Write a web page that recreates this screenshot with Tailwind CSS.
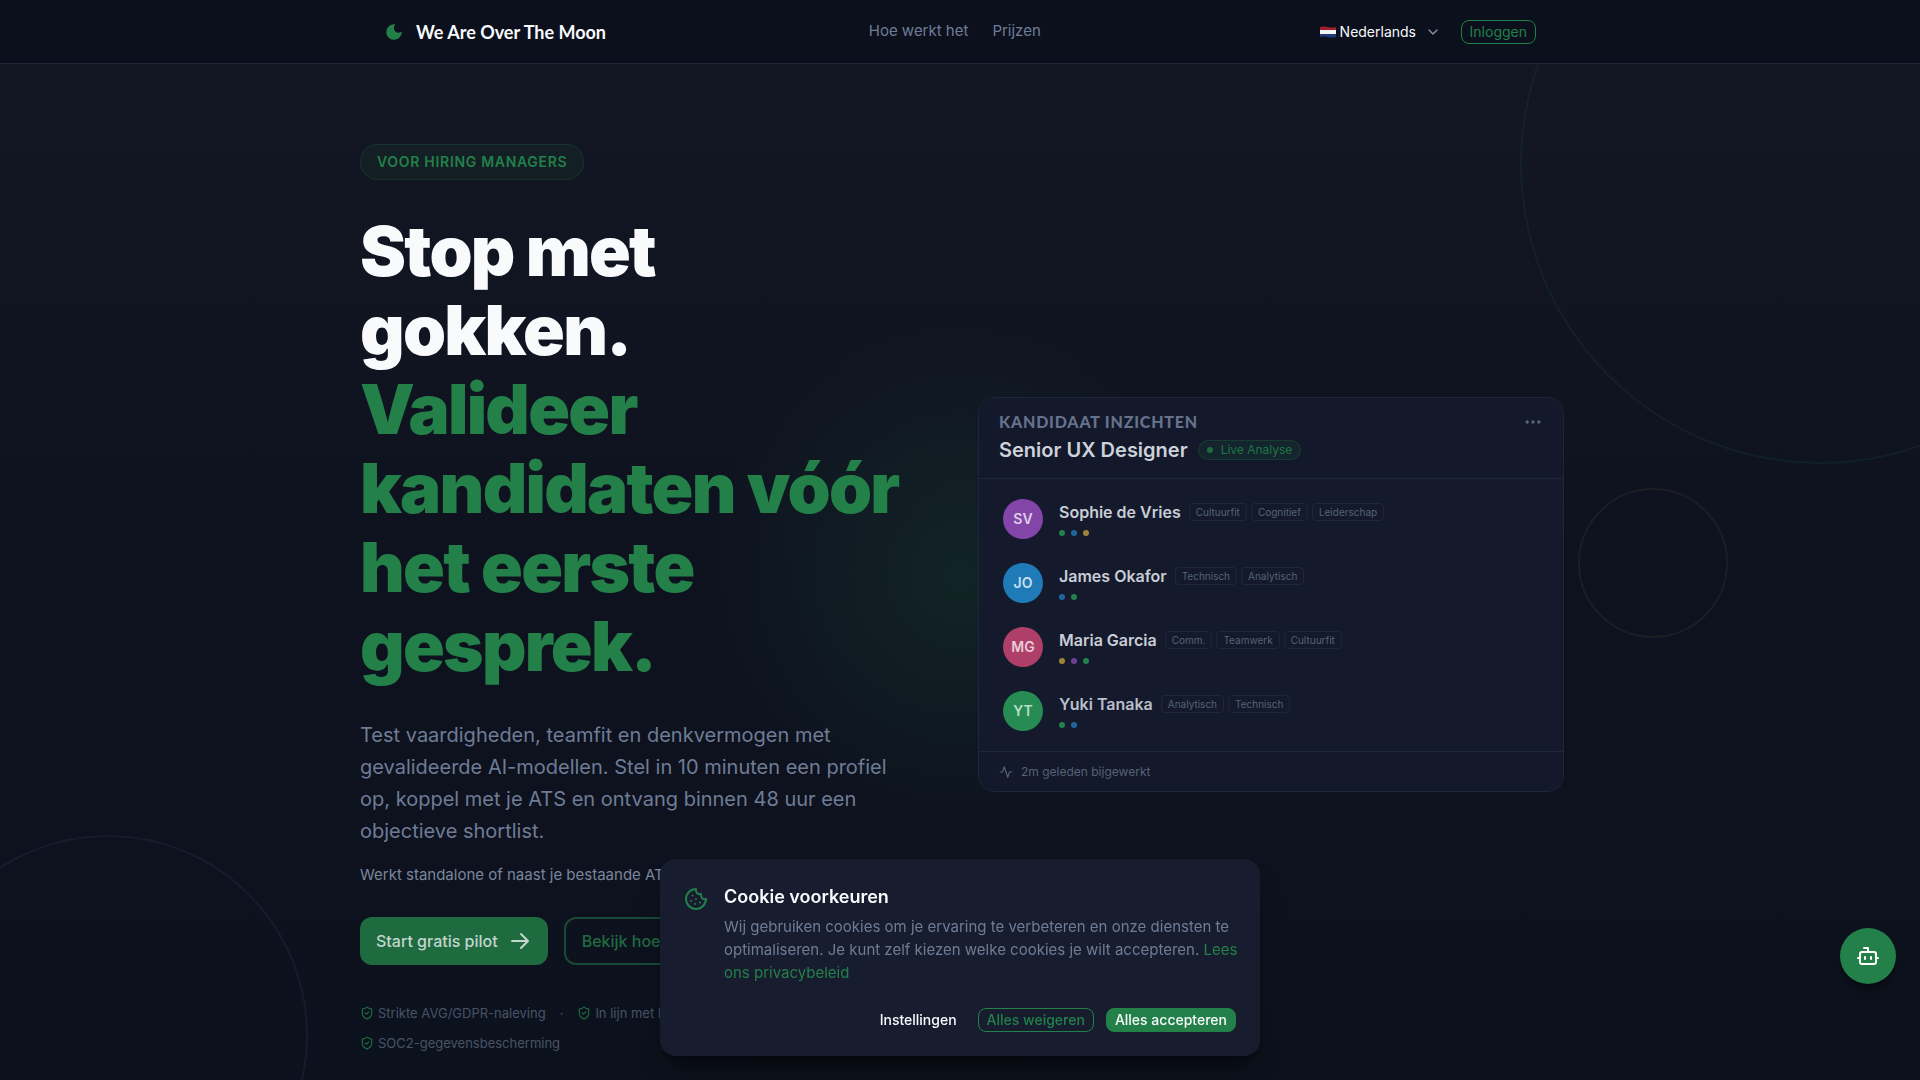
<!DOCTYPE html>
<html lang="nl">
<head>
    <meta charset="UTF-8">
    <meta name="viewport" content="width=device-width, initial-scale=1.0">
    <title>We Are Over The Moon</title>
    <script src="https://cdn.jsdelivr.net/npm/@tailwindcss/browser@4"></script>
</head>
<body class="bg-[#0d131e] font-['Inter',sans-serif] text-slate-50 overflow-x-hidden">
    <header class="relative z-20 bg-[#0c101d] border-b border-[#1e2739]">
        <div class="max-w-[1152px] h-[63px] mx-auto flex items-center justify-between">
            <a href="/" class="flex items-center gap-3 font-['Lato',sans-serif] text-lg font-bold">
                <svg class="size-5" viewBox="0 0 20 20" fill="#228048"><path d="M9.600 2.200A7.800 7.800 0 1 0 17.800 10.400C17.800 9.900 17.400 9.700 17 10c-2.200 1.500-5 .8-6.300-1.200-1.100-1.700-1-3.900.1-5.600.3-.5 0-1-.6-1z"/></svg>
                We Are Over The Moon
            </a>
            <nav class="mr-4 flex items-center gap-6 text-[15px] text-[#6f7c96]">
                <a href="#hoe-werkt-het">Hoe werkt het</a>
                <a href="#prijzen">Prijzen</a>
            </nav>
            <div class="flex items-center gap-5">
                <div class="relative flex items-center gap-1">
                    <svg class="w-4 h-3" viewBox="0 0 16 12"><path fill="#a51d2d" d="M0 1q4-1 8 0t8 0v4H0z"/><path fill="#f4f5f7" d="M0 4h16v4H0z"/><path fill="#1e3a78" d="M0 8h16v3q-4 1-8 0t-8 0z"/></svg>
                    <label for="language" class="hidden">Taal</label>
                    <select id="language" class="appearance-none bg-transparent h-6 pr-6 text-sm leading-5">
                        <option>Nederlands</option>
                    </select>
                    <svg class="absolute right-0 size-4 pointer-events-none" viewBox="0 0 24 24" fill="none" stroke="#8a95a8" stroke-width="2" stroke-linecap="round" stroke-linejoin="round"><path d="m6 9 6 6 6-6"/></svg>
                </div>
                <a href="/login" class="flex items-center h-6 px-2 rounded-lg border border-[#228048] text-sm text-[#228048]">Inloggen</a>
            </div>
        </div>
    </header>

    <main class="relative overflow-hidden min-h-[calc(100vh-64px)] bg-linear-to-b from-[#131623] via-[#0e121f] to-[#0c121d]">
        <!-- Decorative rings and glow -->
        <div class="absolute -top-50 -right-50 size-150 rounded-full border-2 border-[#228048]/12"></div>
        <div class="absolute top-106 right-[10%] size-[150px] rounded-full border-2 border-[#a08040]/10"></div>
        <div class="absolute top-[771px] -left-[92px] size-100 rounded-full border-2 border-[#404070]/20"></div>
        <div class="absolute top-53 left-1/2 size-150 -translate-x-1/2 bg-radial from-[#228048]/16 to-transparent to-60%"></div>

        <div class="relative max-w-[1200px] mx-auto pt-20 pb-6 flex items-center justify-between gap-8">
            <section class="max-w-[560px]">
                <p class="inline-flex items-center h-9 px-4 rounded-full border border-[#228048]/20 bg-[#228048]/10 text-sm font-semibold tracking-wider text-[#228048]">VOOR HIRING MANAGERS</p>
                <h1 class="mt-8 text-[69px] leading-[79px] font-black tracking-tight">
                    <span class="block">Stop met<br>gokken.</span>
                    <span class="block text-[#228048]">Valideer<br><span class="whitespace-nowrap">kandidaten vóór</span><br>het eerste<br>gesprek.</span>
                </h1>
                <p class="mt-[33px] text-xl leading-8 text-[#6f7c96]">Test vaardigheden, teamfit en denkvermogen met gevalideerde AI-modellen. Stel in 10 minuten een profiel op, koppel met je ATS en ontvang binnen 48 uur een objectieve shortlist.</p>
                <p class="mt-4 text-[15px] leading-6 text-[#7a869c]">Werkt standalone of naast je bestaande ATS-systeem.</p>
                <div class="mt-[30px] flex gap-4">
                    <a href="/pilot" class="flex items-center gap-[10px] h-12 px-4 rounded-xl bg-[#1d6b3f] text-base font-medium text-[#c3d6cd]">Start gratis pilot
                        <svg class="size-6" viewBox="0 0 24 24" fill="none" stroke="currentColor" stroke-width="2" stroke-linecap="round" stroke-linejoin="round"><path d="M4 12h16M13 5l7 7-7 7"/></svg>
                    </a>
                    <a href="#hoe-werkt-het" class="flex items-center h-12 px-4 rounded-xl border-2 border-[#1a4a35] text-base font-medium text-[#1f6b41]">Bekijk hoe het werkt</a>
                </div>
                <ul class="mt-[38px] flex flex-wrap items-center gap-x-[14px] gap-y-[10px] text-[13px] leading-5 text-[#485266]">
                    <li class="flex items-center gap-1">
                        <svg class="size-[14px]" viewBox="0 0 24 24" fill="none" stroke="#1f6b41" stroke-width="2" stroke-linecap="round" stroke-linejoin="round"><path d="M20 13c0 5-3.500 7.500-7.700 9a1 1 0 0 1-.6 0C7.500 20.500 4 18 4 13V6a1 1 0 0 1 1-1c2 0 4.500-1.200 6.200-2.700a1.200 1.200 0 0 1 1.600 0C14.500 3.800 17 5 19 5a1 1 0 0 1 1 1z"/><path d="m9 12 2 2 4-4"/></svg>
                        Strikte AVG/GDPR-naleving
                    </li>
                    <li aria-hidden="true">·</li>
                    <li class="flex items-center gap-1">
                        <svg class="size-[14px]" viewBox="0 0 24 24" fill="none" stroke="#1f6b41" stroke-width="2" stroke-linecap="round" stroke-linejoin="round"><path d="M20 13c0 5-3.500 7.500-7.700 9a1 1 0 0 1-.6 0C7.500 20.500 4 18 4 13V6a1 1 0 0 1 1-1c2 0 4.500-1.200 6.200-2.700a1.200 1.200 0 0 1 1.600 0C14.500 3.800 17 5 19 5a1 1 0 0 1 1 1z"/><path d="m9 12 2 2 4-4"/></svg>
                        In lijn met EU AI Act-vereisten
                    </li>
                    <li class="flex items-center gap-1">
                        <svg class="size-[14px]" viewBox="0 0 24 24" fill="none" stroke="#1f6b41" stroke-width="2" stroke-linecap="round" stroke-linejoin="round"><path d="M20 13c0 5-3.500 7.500-7.700 9a1 1 0 0 1-.6 0C7.500 20.500 4 18 4 13V6a1 1 0 0 1 1-1c2 0 4.500-1.200 6.200-2.700a1.200 1.200 0 0 1 1.600 0C14.500 3.800 17 5 19 5a1 1 0 0 1 1 1z"/><path d="m9 12 2 2 4-4"/></svg>
                        SOC2-gegevensbescherming
                    </li>
                </ul>
            </section>

            <section class="w-full max-w-[586px] mb-2 -mr-1 rounded-2xl border border-[#1e2739] bg-[#141a2c] overflow-hidden">
                <div class="flex items-start justify-between px-5 pt-[10px] pb-[14px] border-b border-[#1e2739] bg-[#13182b]">
                    <div>
                        <h2 class="font-['Lato',sans-serif] text-base leading-7 font-black tracking-wider text-[#66728b]">KANDIDAAT INZICHTEN</h2>
                        <div class="flex items-center gap-[10px]">
                            <h3 class="text-xl leading-7 font-semibold text-[#cdd2da]">Senior UX Designer</h3>
                            <span class="flex items-center gap-2 h-5 px-2 rounded-full border border-[#228048]/25 bg-[#228048]/12 text-xs text-[#1f7544]"><span class="size-1.5 rounded-full bg-[#1f6b41]"></span>Live Analyse</span>
                        </div>
                    </div>
                    <button type="button" aria-label="Meer opties" class="pt-1">
                        <svg class="size-5" viewBox="0 0 24 24" fill="#5c677d"><circle cx="5" cy="12" r="2"/><circle cx="12" cy="12" r="2"/><circle cx="19" cy="12" r="2"/></svg>
                    </button>
                </div>
                <ul class="px-6 pt-5 pb-5 space-y-6">
                    <li class="flex items-center gap-4">
                        <span class="size-10 shrink-0 rounded-full bg-[#8445a9] flex items-center justify-center text-sm font-semibold text-[#dcd0e6]">SV</span>
                        <div>
                            <div class="flex items-center gap-2">
                                <span class="text-base leading-5 font-semibold text-[#c8cdd6]">Sophie de Vries</span>
                                <span class="flex gap-1 text-[10px] leading-4 text-[#566176]"><span class="px-1.5 rounded-sm border border-[#1e2739]">Cultuurfit</span><span class="px-1.5 rounded-sm border border-[#1e2739]">Cognitief</span><span class="px-1.5 rounded-sm border border-[#1e2739]">Leiderschap</span></span>
                            </div>
                            <div class="mt-2 flex gap-1.5"><span class="size-1.5 rounded-full bg-[#24804d]"></span><span class="size-1.5 rounded-full bg-[#21659c]"></span><span class="size-1.5 rounded-full bg-[#a0833a]"></span></div>
                        </div>
                    </li>
                    <li class="flex items-center gap-4">
                        <span class="size-10 shrink-0 rounded-full bg-[#1f7ab8] flex items-center justify-center text-sm font-semibold text-[#c8dff0]">JO</span>
                        <div>
                            <div class="flex items-center gap-2">
                                <span class="text-base leading-5 font-semibold text-[#c8cdd6]">James Okafor</span>
                                <span class="flex gap-1 text-[10px] leading-4 text-[#566176]"><span class="px-1.5 rounded-sm border border-[#1e2739]">Technisch</span><span class="px-1.5 rounded-sm border border-[#1e2739]">Analytisch</span></span>
                            </div>
                            <div class="mt-2 flex gap-1.5"><span class="size-1.5 rounded-full bg-[#21659c]"></span><span class="size-1.5 rounded-full bg-[#24804d]"></span></div>
                        </div>
                    </li>
                    <li class="flex items-center gap-4">
                        <span class="size-10 shrink-0 rounded-full bg-[#ad3f69] flex items-center justify-center text-sm font-semibold text-[#eacbd8]">MG</span>
                        <div>
                            <div class="flex items-center gap-2">
                                <span class="text-base leading-5 font-semibold text-[#c8cdd6]">Maria Garcia</span>
                                <span class="flex gap-1 text-[10px] leading-4 text-[#566176]"><span class="px-1.5 rounded-sm border border-[#1e2739]">Comm.</span><span class="px-1.5 rounded-sm border border-[#1e2739]">Teamwerk</span><span class="px-1.5 rounded-sm border border-[#1e2739]">Cultuurfit</span></span>
                            </div>
                            <div class="mt-2 flex gap-1.5"><span class="size-1.5 rounded-full bg-[#a0833a]"></span><span class="size-1.5 rounded-full bg-[#6f3f96]"></span><span class="size-1.5 rounded-full bg-[#24804d]"></span></div>
                        </div>
                    </li>
                    <li class="flex items-center gap-4">
                        <span class="size-10 shrink-0 rounded-full bg-[#278c53] flex items-center justify-center text-sm font-semibold text-[#b9dec9]">YT</span>
                        <div>
                            <div class="flex items-center gap-2">
                                <span class="text-base leading-5 font-semibold text-[#b9bfca]">Yuki Tanaka</span>
                                <span class="flex gap-1 text-[10px] leading-4 text-[#566176]"><span class="px-1.5 rounded-sm border border-[#1e2739]">Analytisch</span><span class="px-1.5 rounded-sm border border-[#1e2739]">Technisch</span></span>
                            </div>
                            <div class="mt-2 flex gap-1.5"><span class="size-1.5 rounded-full bg-[#24804d]"></span><span class="size-1.5 rounded-full bg-[#21659c]"></span></div>
                        </div>
                    </li>
                </ul>
                <div class="flex items-center gap-2 h-10 px-5 border-t border-[#1e2739] bg-[#13182b] text-xs text-[#566176]">
                    <svg class="size-[14px]" viewBox="0 0 24 24" fill="none" stroke="currentColor" stroke-width="2" stroke-linecap="round" stroke-linejoin="round"><path d="M22 12h-4l-3 9L9 3l-3 9H2"/></svg>
                    2m geleden bijgewerkt
                </div>
            </section>
        </div>
    </main>

    <!-- Cookie banner -->
    <div role="dialog" aria-labelledby="cookie-title" class="fixed z-30 bottom-6 left-1/2 -translate-x-1/2 w-full max-w-[600px] rounded-2xl bg-[#171d2f] p-6 shadow-xl shadow-black/40">
        <div class="flex gap-4">
            <svg class="size-6 mt-1 shrink-0" viewBox="0 0 24 24" fill="none" stroke="#228048" stroke-width="2" stroke-linecap="round" stroke-linejoin="round"><path d="M12 2a10 10 0 1 0 10 10 4 4 0 0 1-5-5 4 4 0 0 1-5-5"/><path d="M8.500 8.500v.01M16 15.500v.01M12 12v.01M11 17v.01M7 14v.01"/></svg>
            <div class="-mr-2">
                <h2 id="cookie-title" class="text-lg leading-7 font-semibold">Cookie voorkeuren</h2>
                <p class="mt-1 text-[15px] leading-[23px] text-[#6f7c96]">Wij gebruiken cookies om je ervaring te verbeteren en onze diensten te optimaliseren. Je kunt zelf kiezen welke cookies je wilt accepteren. <a href="/privacy" class="text-[#228048]">Lees ons privacybeleid</a></p>
            </div>
        </div>
        <div class="mt-6 flex justify-end gap-3 text-sm leading-[22px] font-medium">
            <button type="button" class="px-2 border border-transparent">Instellingen</button>
            <button type="button" class="px-2 rounded-lg border border-[#228048] text-[#228048]">Alles weigeren</button>
            <button type="button" class="px-2 rounded-lg border border-[#228048] bg-[#228048]">Alles accepteren</button>
        </div>
    </div>

    <button type="button" aria-label="Open chat" class="fixed z-30 bottom-24 right-6 size-14 rounded-full bg-[#228048] flex items-center justify-center shadow-lg shadow-black/40">
        <svg class="size-6" viewBox="0 0 24 24" fill="none" stroke="#fff" stroke-width="2" stroke-linecap="round" stroke-linejoin="round"><path d="M12 8V4H8"/><rect width="16" height="12" x="4" y="8" rx="2"/><path d="M2 14h2M20 14h2M15 13v2M9 13v2"/></svg>
    </button>
</body>
</html>
